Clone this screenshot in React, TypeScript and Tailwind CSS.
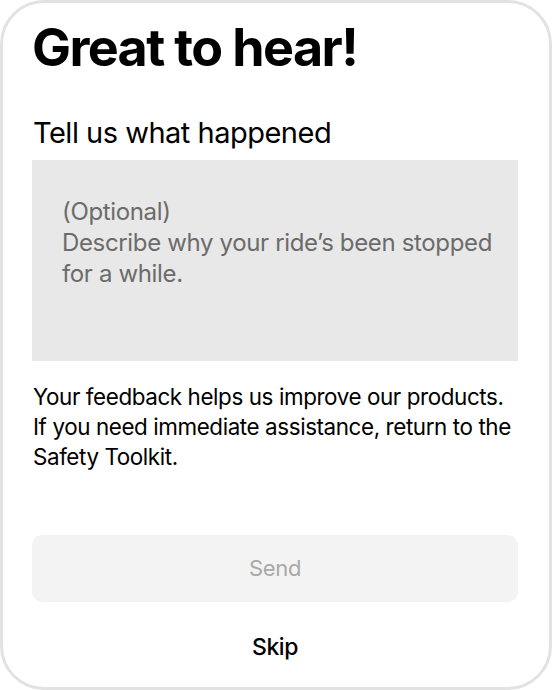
import React from 'react';

export default function App() {
  return (
    <div className="w-[552px] h-[690px] bg-white" style={{ fontFamily: 'Inter, "Noto Sans", sans-serif' }}>
      <div className="w-full h-full border-[3px] border-[#e2e2e2] rounded-[44px] pl-[29px] pr-[31px] pt-[15px] pb-[26px] flex flex-col">
        <h1 className="text-[52px] leading-[60px] font-bold text-black tracking-[-1.6px]">Great to hear!</h1>

        <h2 className="mt-[38px] text-[29px] leading-[34px] font-normal text-black tracking-[-0.5px] pl-[1px]">Tell us what happened</h2>

        <div className="mt-[10px] h-[201px] bg-[#e8e8e8] pl-[30px] pr-[12px] pt-[36px]">
          <p className="text-[24px] leading-[31px] text-[#6b6b6b] tracking-[-0.35px]">
            (Optional)
            <br />
            Describe why your ride’s been stopped
            <br />
            for a while.
          </p>
        </div>

        <p className="mt-[21px] w-[486px] pl-[1px] text-[22.4px] leading-[30px] text-black tracking-[-0.4px]">
          Your feedback helps us improve our products. If you need immediate assistance, return to the Safety Toolkit.
        </p>

        <div className="flex-1" />

        <button className="h-[67px] w-full rounded-[10px] bg-[#f3f3f3] text-[22px] text-[#a8a8a8] tracking-[-0.3px]">
          Send
        </button>

        <button className="mt-[31px] text-[23px] leading-[28px] font-medium text-black self-center tracking-[-0.4px]">Skip</button>
      </div>
    </div>
  );
}
